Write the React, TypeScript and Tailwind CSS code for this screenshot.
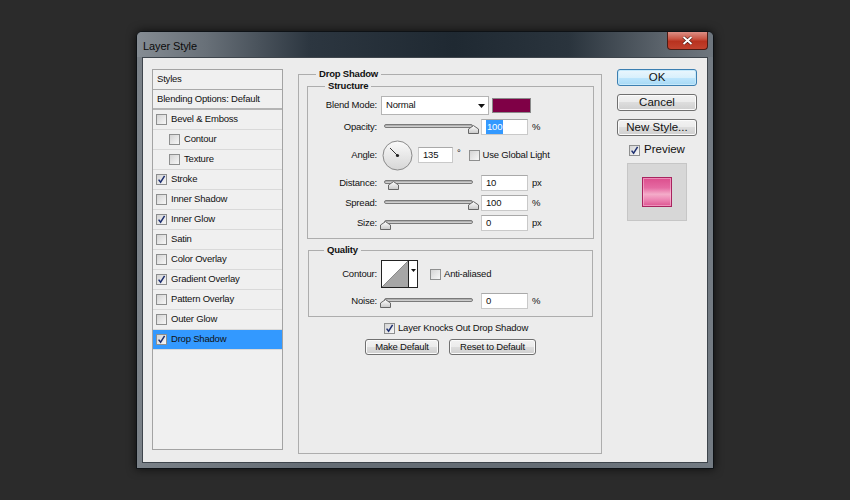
import clsx from "clsx";

type Item = { label: string; on?: boolean; sub?: boolean; active?: boolean };

const items: Item[] = [
  { label: "Bevel & Emboss" },
  { label: "Contour", sub: true },
  { label: "Texture", sub: true },
  { label: "Stroke", on: true },
  { label: "Inner Shadow" },
  { label: "Inner Glow", on: true },
  { label: "Satin" },
  { label: "Color Overlay" },
  { label: "Gradient Overlay", on: true },
  { label: "Pattern Overlay" },
  { label: "Outer Glow" },
  { label: "Drop Shadow", on: true, active: true },
];

function Check({ on, className }: { on?: boolean; className?: string }) {
  return (
    <span
      className={clsx(
        "flex h-[11px] w-[11px] shrink-0 items-center justify-center border border-[#8e8f8f] bg-[linear-gradient(135deg,#d4d4d4,#f7f7f7)]",
        className
      )}
    >
      {on && (
        <svg width="9" height="9" viewBox="0 0 9 9">
          <path d="M1.6 4.6 L3.6 7.2 L7.6 0.8" fill="none" stroke="#1d2f70" strokeWidth="1.5" />
        </svg>
      )}
    </span>
  );
}

function Slider({ value }: { value: number }) {
  return (
    <div className="relative ml-[7px] h-[16px] w-[89px] shrink-0">
      <div className="mt-[5px] h-[4px] rounded-full border border-[#7a7a7a] bg-[linear-gradient(#a2a2a2,#dcdcdc)]" />
      <svg
        className="absolute top-[6px]"
        style={{ left: (value * 88) / 100 - 4.5 }}
        width="11"
        height="9"
        viewBox="0 0 11 9"
      >
        <defs>
          <linearGradient id="thumb" x1="0" y1="0" x2="0" y2="1">
            <stop offset="0" stopColor="#ffffff" />
            <stop offset="1" stopColor="#c8c8c8" />
          </linearGradient>
        </defs>
        <path d="M0.5 8.5 V4 L5.5 0.6 L10.5 4 V8.5 Z" fill="url(#thumb)" stroke="#666" />
      </svg>
    </div>
  );
}

function Field({ value, selected, className }: { value: string; selected?: boolean; className?: string }) {
  return (
    <div
      className={clsx(
        "flex h-[16px] shrink-0 items-center border border-[#c9c9c9] border-t-[#a9a9a9] bg-white pl-[4px]",
        className
      )}
    >
      <span className={clsx(selected && "bg-[#3399ff] px-[1px] text-white")}>{value}</span>
    </div>
  );
}

function SliderRow({
  label,
  value,
  unit,
  selected,
  className,
}: {
  label: string;
  value: number;
  unit: string;
  selected?: boolean;
  className?: string;
}) {
  return (
    <div className={clsx("flex h-[16px] items-center", className)}>
      <span className="w-[69px] shrink-0 text-right">{label}</span>
      <Slider value={value} />
      <Field value={String(value)} selected={selected} className="ml-[8px] w-[47px]" />
      <span className="ml-[4px]">{unit}</span>
    </div>
  );
}

function Button({ children, className, primary }: { children: string; className?: string; primary?: boolean }) {
  return (
    <div
      className={clsx(
        "flex items-center justify-center rounded-[3px] border",
        primary
          ? "border-[#3c7fb1] bg-[linear-gradient(#eaf6fd_0%,#d9f0fc_50%,#bee6fd_50%,#a7d9f5_100%)] shadow-[inset_0_0_0_1px_#c6e9fb]"
          : "border-[#707070] bg-[linear-gradient(#f2f2f2_0%,#ebebeb_50%,#dddddd_50%,#cfcfcf_100%)] shadow-[inset_0_0_0_1px_#fbfbfb]",
        className
      )}
    >
      {children}
    </div>
  );
}

export default function App() {
  return (
    <div className="h-[500px] w-[850px] bg-[#2b2b2b] pl-[136px] pt-[31px] font-['Liberation_Sans',Arial,sans-serif] text-[9.5px] tracking-[-0.2px] text-[#111]">
      <div className="flex h-[438px] w-[578px] flex-col rounded-t-[6px] border border-[#0e1216] bg-[linear-gradient(90deg,#7a8188,#646c74_30%,#646c74_70%,#737b83)] shadow-[0_0_10px_rgba(0,0,0,0.7)]">
        {/* title bar */}
        <div className="flex h-[25px] shrink-0 items-start rounded-t-[5px] bg-[linear-gradient(90deg,#858c93_0%,#687078_12%,#2c3640_30%,#1f2932_55%,#2a343d_75%,#5e666e_92%,#6e767e_100%)]">
          <span className="ml-[6px] mt-[6px] text-[11px] tracking-[-0.1px] text-[#0b0b0b]">Layer Style</span>
          <div className="ml-auto mr-[5px] flex h-[18px] w-[41px] items-center justify-center rounded-b-[4px] border border-t-0 border-[#4b1c15] bg-[linear-gradient(#dc8f85_0%,#c95544_40%,#b8321f_55%,#c2422e_100%)]">
            <svg width="11" height="9" viewBox="0 0 11 9">
              <path d="M1.5 1 L9.5 8 M9.5 1 L1.5 8" stroke="#3b0f0a" strokeWidth="3" />
              <path d="M1.5 1 L9.5 8 M9.5 1 L1.5 8" stroke="#ffffff" strokeWidth="2" />
            </svg>
          </div>
        </div>

        {/* client area */}
        <div className="mx-[5px] mb-[5px] flex flex-1 items-start border border-[#3e454c] bg-[#ececec] pl-[9px] pt-[11px]">
          {/* styles list */}
          <div className="flex h-[381px] w-[131px] shrink-0 flex-col border border-[#a3a3a3] bg-[#f0f0f0]">
            <div className="flex h-[20px] shrink-0 items-center border-b border-[#a9a9a9] pl-[4px]">Styles</div>
            <div className="flex h-[20px] shrink-0 items-center border-b-2 border-[#b4b4b4] pl-[4px]">Blending Options: Default</div>
            {items.map((item) => (
              <div
                key={item.label}
                className={clsx(
                  "flex h-[20px] shrink-0 items-center border-b border-[#d9d9d9]",
                  item.sub ? "pl-[16px]" : "pl-[3px]",
                  item.active && "bg-[#3399ff]"
                )}
              >
                <Check on={item.on} />
                <span className="ml-[4px]">{item.label}</span>
              </div>
            ))}
          </div>

          {/* main panel */}
          <fieldset className="ml-[15px] mt-[-1px] h-[386px] w-[304px] shrink-0 border border-[#adadad] px-0">
            <legend className="ml-[17px] px-[3px] text-[9.5px] font-bold leading-[12px]">Drop Shadow</legend>

            <fieldset className="ml-[8px] mr-[7px] border border-[#adadad] pb-[7px]">
              <legend className="ml-[17px] px-[3px] font-bold leading-[12px]">Structure</legend>

              <div className="mt-[4px] flex h-[19px] items-center">
                <span className="w-[69px] shrink-0 text-right">Blend Mode:</span>
                <div className="ml-[4px] flex h-[19px] w-[108px] items-center border border-[#b4b4b4] bg-white pl-[4px]">
                  Normal
                  <svg className="ml-auto mr-[3px]" width="7" height="4" viewBox="0 0 7 4">
                    <path d="M0 0 H7 L3.5 4 Z" fill="#111" />
                  </svg>
                </div>
                <div className="ml-[3px] h-[15px] w-[39px] border border-[#8a8a8a] bg-[#7f0046]" />
              </div>

              <SliderRow label="Opacity:" value={100} unit="%" selected className="mt-[4px]" />

              <div className="mt-[5px] flex h-[30px] items-center">
                <span className="w-[69px] shrink-0 text-right">Angle:</span>
                <svg className="ml-[5px] shrink-0" width="31" height="31" viewBox="0 0 31 31">
                  <defs>
                    <linearGradient id="dial" x1="0" y1="0" x2="0" y2="1">
                      <stop offset="0" stopColor="#fafafa" />
                      <stop offset="1" stopColor="#d6d6d6" />
                    </linearGradient>
                  </defs>
                  <circle cx="15.5" cy="15.5" r="14.5" fill="url(#dial)" stroke="#8a8a8a" />
                  <line x1="15.5" y1="15.5" x2="8" y2="8" stroke="#333" strokeWidth="1" />
                  <circle cx="15.5" cy="15.5" r="1.6" fill="#222" />
                </svg>
                <Field value="135" className="ml-[5px] w-[35px]" />
                <span className="ml-[4px] self-start pt-[6px]">°</span>
                <Check className="ml-[8px]" />
                <span className="ml-[3px]">Use Global Light</span>
              </div>

              <SliderRow label="Distance:" value={10} unit="px" className="mt-[5px]" />
              <SliderRow label="Spread:" value={100} unit="%" className="mt-[4px]" />
              <SliderRow label="Size:" value={0} unit="px" className="mt-[4px]" />
            </fieldset>

            <fieldset className="ml-[9px] mr-[8px] mt-[5px] border border-[#adadad] pb-[7px]">
              <legend className="ml-[15px] px-[3px] font-bold leading-[12px]">Quality</legend>

              <div className="mt-[4px] flex h-[28px] items-center">
                <span className="w-[68px] shrink-0 text-right">Contour:</span>
                <div className="ml-[4px] flex h-[28px] w-[37px] shrink-0 border border-[#222] bg-white">
                  <svg width="26" height="26" viewBox="0 0 26 26">
                    <path d="M0 26 L26 0 V26 Z" fill="#a6a6a6" />
                    <path d="M0 26 L26 0" stroke="#777" strokeWidth="0.8" />
                  </svg>
                  <div className="flex w-[9px] justify-center border-l border-[#222] pt-[8px]">
                    <svg width="5" height="3" viewBox="0 0 5 3">
                      <path d="M0 0 H5 L2.5 3 Z" fill="#111" />
                    </svg>
                  </div>
                </div>
                <Check className="ml-[12px]" />
                <span className="ml-[3px]">Anti-aliased</span>
              </div>

              <div className="mt-[5px] flex h-[16px] items-center">
                <span className="w-[68px] shrink-0 text-right">Noise:</span>
                <Slider value={0} />
                <Field value="0" className="ml-[8px] w-[47px]" />
                <span className="ml-[4px]">%</span>
              </div>
            </fieldset>

            <div className="ml-[85px] mt-[6px] flex h-[11px] items-center">
              <Check on />
              <span className="ml-[3px]">Layer Knocks Out Drop Shadow</span>
            </div>

            <div className="ml-[66px] mt-[5px] flex">
              <Button className="h-[16px] w-[74px]">Make Default</Button>
              <Button className="ml-[10px] h-[16px] w-[87px]">Reset to Default</Button>
            </div>
          </fieldset>

          {/* right column */}
          <div className="ml-[15px] flex w-[80px] shrink-0 flex-col text-[11.5px] tracking-normal">
            <Button primary className="h-[17px]">OK</Button>
            <Button className="mt-[8px] h-[17px]">Cancel</Button>
            <Button className="mt-[8px] h-[17px]">New Style...</Button>
            <div className="ml-[12px] mt-[8px] flex h-[12px] items-center">
              <Check on />
              <span className="ml-[4px]">Preview</span>
            </div>
            <div className="ml-[10px] mt-[7px] flex h-[58px] w-[60px] items-center justify-center border border-[#c6c6c6] bg-[#d7d7d7]">
              <div className="h-[30px] w-[30px] border border-[#a8245f] bg-[linear-gradient(#dc4e8d_0%,#e56aa2_35%,#f4acc9_58%,#ee8bb7_75%,#dd5592_100%)] shadow-[inset_0_0_0_1px_rgba(255,200,225,0.5)]" />
            </div>
          </div>
        </div>
      </div>
    </div>
  );
}
